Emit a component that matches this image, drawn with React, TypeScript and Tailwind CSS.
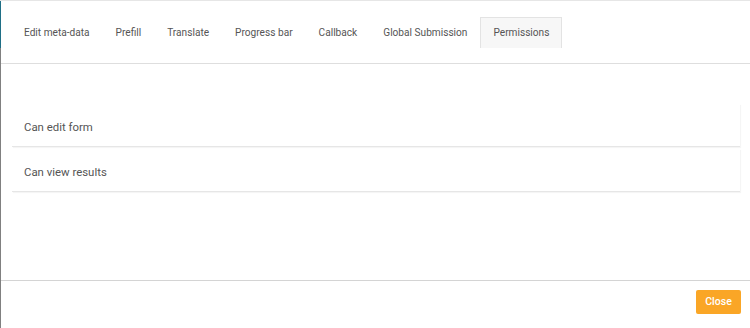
import React, { useState } from "react";

const tabs = ["Edit meta-data", "Prefill", "Translate", "Progress bar", "Callback", "Global Submission", "Permissions"];

export default function App() {
  const [active, setActive] = useState("Permissions");

  return (
    <div className="w-[750px] h-[328px] bg-white flex flex-col border-t border-[#e6e6e6] relative text-[#555] font-['Roboto',sans-serif]">
      {/* left edge strip */}
      <div className="absolute left-0 top-0 h-[47px] w-px bg-[#1f6f86]"></div>
      <div className="absolute left-0 top-[47px] bottom-0 w-px bg-[#808080]"></div>

      {/* Tabs */}
      <div className="h-[63px] border-b border-[#dedede] flex items-start pt-[16px] pl-[11px]">
        {tabs.map((t) => (
          <button
            key={t}
            onClick={() => setActive(t)}
            className={`h-[31px] px-3 text-[10.15px] leading-none border border-b-0 ${active === t ? "bg-[#f7f7f7] border-[#e3e3e3]" : "bg-transparent border-transparent"}`}
          >
            {t}
          </button>
        ))}
      </div>

      {/* Permission rows */}
      <div className="flex-1 pl-3 pr-[10px] pt-[40px]">
        <div className="h-[43px] flex items-center px-3 pt-[5px] text-[11.4px] border-b border-[#e6e6e6] shadow-[1px_1px_1px_rgba(0,0,0,0.04)]">Can edit form</div>
        <div className="h-[43px] mt-[2px] flex items-center px-3 pt-[5px] text-[11.4px] border-b border-[#e6e6e6] shadow-[1px_1px_1px_rgba(0,0,0,0.04)]">Can view results</div>
      </div>

      {/* Footer */}
      <div className="h-[48px] border-t border-[#d4d4d4] flex items-start pt-[9px] justify-end pr-[9px]">
        <button className="h-[24px] w-[45px] bg-[#faa626] text-white text-[10.5px] font-medium rounded-[2px]">Close</button>
      </div>
    </div>
  );
}
